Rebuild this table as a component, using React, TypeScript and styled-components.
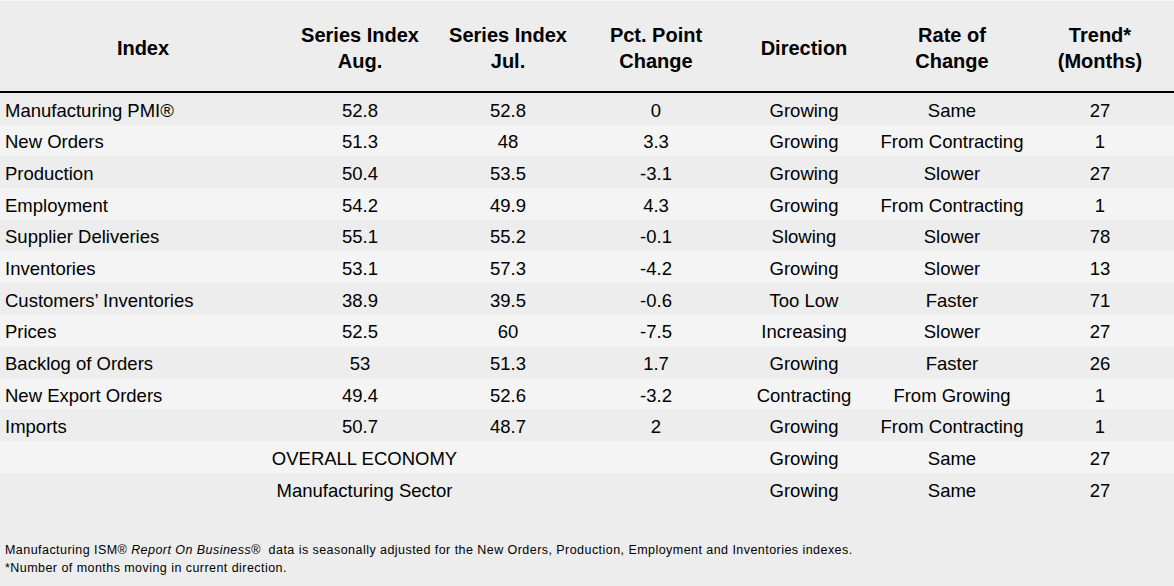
import React from "react";
import styled, { createGlobalStyle } from "styled-components";

const Global = createGlobalStyle`
  html, body { margin: 0; padding: 0; background: #ededed; }
  body { font-family: "Liberation Sans", Arial, sans-serif; color: #000; }
`;

const Page = styled.div`
  width: 1174px;
  height: 586px;
  background: #ededed;
  box-sizing: border-box;
  border-top: 1px solid #f7f7f7;
  display: flex;
  flex-direction: column;
  overflow: hidden;
`;

const cols = `286px repeat(6, 148px)`;

const HeaderRow = styled.div`
  display: grid;
  grid-template-columns: ${cols};
  height: 90px;
  border-bottom: 2px solid #000;
`;

const HeadCell = styled.div<{ $shift?: number }>`
  display: flex;
  align-items: center;
  justify-content: center;
  text-align: center;
  font-weight: bold;
  font-size: 20px;
  line-height: 26px;
  padding-top: 3px;
  padding-left: ${(p) => p.$shift ?? 0}px;
`;

const Row = styled.div<{ $alt: boolean }>`
  display: grid;
  grid-template-columns: ${cols};
  height: 31.65px;
  background: ${(p) => (p.$alt ? "#f4f4f4" : "#ededed")};
  font-size: 18.5px;
`;

const Label = styled.div`
  display: flex;
  align-items: center;
  padding-left: 5px;
  white-space: nowrap;
  padding-top: 4px;
`;

const Cell = styled.div<{ $shift?: number }>`
  display: flex;
  align-items: center;
  justify-content: center;
  white-space: nowrap;
  padding-top: 4px;
  padding-left: ${(p) => p.$shift ?? 0}px;
`;

const Footnotes = styled.div`
  margin-top: 37px;
  padding-left: 5px;
  font-size: 12.5px;
  letter-spacing: 0.45px;
  line-height: 18px;
`;

const Em = styled.span`
  font-style: italic;
`;

type Data = [string, string, string, string, string, string, string];

const rows: Data[] = [
  ["Manufacturing PMI®", "52.8", "52.8", "0", "Growing", "Same", "27"],
  ["New Orders", "51.3", "48", "3.3", "Growing", "From Contracting", "1"],
  ["Production", "50.4", "53.5", "-3.1", "Growing", "Slower", "27"],
  ["Employment", "54.2", "49.9", "4.3", "Growing", "From Contracting", "1"],
  ["Supplier Deliveries", "55.1", "55.2", "-0.1", "Slowing", "Slower", "78"],
  ["Inventories", "53.1", "57.3", "-4.2", "Growing", "Slower", "13"],
  ["Customers’ Inventories", "38.9", "39.5", "-0.6", "Too Low", "Faster", "71"],
  ["Prices", "52.5", "60", "-7.5", "Increasing", "Slower", "27"],
  ["Backlog of Orders", "53", "51.3", "1.7", "Growing", "Faster", "26"],
  ["New Export Orders", "49.4", "52.6", "-3.2", "Contracting", "From Growing", "1"],
  ["Imports", "50.7", "48.7", "2", "Growing", "From Contracting", "1"],
];

const summary: [string, string, string, string][] = [
  ["OVERALL ECONOMY", "Growing", "Same", "27"],
  ["Manufacturing Sector", "Growing", "Same", "27"],
];

export default function App() {
  return (
    <>
      <Global />
      <Page>
        <HeaderRow>
          <HeadCell>Index</HeadCell>
          <HeadCell>
            Series Index
            <br />
            Aug.
          </HeadCell>
          <HeadCell>
            Series Index
            <br />
            Jul.
          </HeadCell>
          <HeadCell>
            Pct. Point
            <br />
            Change
          </HeadCell>
          <HeadCell>Direction</HeadCell>
          <HeadCell>
            Rate of
            <br />
            Change
          </HeadCell>
          <HeadCell>
            Trend*
            <br />
            (Months)
          </HeadCell>
        </HeaderRow>
        {rows.map((r, i) => (
          <Row key={r[0]} $alt={i % 2 === 1}>
            <Label>{r[0]}</Label>
            {r.slice(1).map((v, j) => (
              <Cell key={j}>{v}</Cell>
            ))}
          </Row>
        ))}
        {summary.map((s, i) => (
          <Row key={s[0]} $alt={(rows.length + i) % 2 === 1}>
            <Cell />
            <Cell $shift={9}>{s[0]}</Cell>
            <Cell />
            <Cell />
            <Cell>{s[1]}</Cell>
            <Cell>{s[2]}</Cell>
            <Cell>{s[3]}</Cell>
          </Row>
        ))}
        <Footnotes>
          Manufacturing ISM® <Em>Report On Business®</Em>&nbsp; data is seasonally adjusted for the New Orders,
          Production, Employment and Inventories indexes.
          <br />
          *Number of months moving in current direction.
        </Footnotes>
      </Page>
    </>
  );
}
